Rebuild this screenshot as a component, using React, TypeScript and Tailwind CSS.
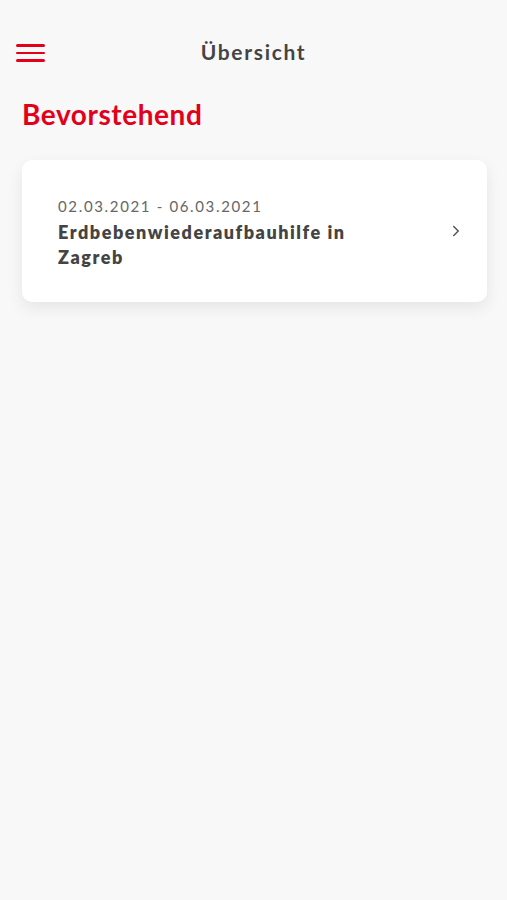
import { ChevronRight } from "lucide-react"

export default function App() {
    return (
        <div className="min-h-[900px] w-full bg-[#f8f8f8]" style={{ fontFamily: "Lato, 'Noto Sans', sans-serif" }}>
            <div className="h-[30px]" />
            <header className="relative flex h-[44px] items-center justify-center">
                <button className="absolute left-[16px] top-[14px] flex flex-col gap-[5px]">
                    <span className="block h-[2.5px] w-[29px] rounded bg-[#e2001a]" />
                    <span className="block h-[2.5px] w-[29px] rounded bg-[#e2001a]" />
                    <span className="block h-[2.5px] w-[29px] rounded bg-[#e2001a]" />
                </button>
                <h1 className="text-[21px] font-bold tracking-[0.08em] text-[#444]">Übersicht</h1>
            </header>
            <main className="pl-[22px] pr-[20px] pt-[24px]">
                <h2 className="text-[28px] font-bold leading-[32px] tracking-[0.02em] text-[#e2001a]">Bevorstehend</h2>
                <div className="mt-[30px] flex h-[142px] items-center rounded-[10px] bg-white pl-[36px] pr-[22px] shadow-[0_6px_16px_rgba(0,0,0,0.08)]">
                    <div className="w-[330px] pt-[4px]">
                        <div className="text-[15px] leading-[20px] tracking-[0.11em] text-[#666]">02.03.2021 - 06.03.2021</div>
                        <div className="mt-[4px] text-[18px] font-extrabold leading-[25px] tracking-[0.085em] text-[#444]">Erdbebenwiederaufbauhilfe in Zagreb</div>
                    </div>
                    <div className="ml-auto">
                        <ChevronRight size={18} strokeWidth={2} className="text-[#555]" />
                    </div>
                </div>
            </main>
        </div>
    )
}
